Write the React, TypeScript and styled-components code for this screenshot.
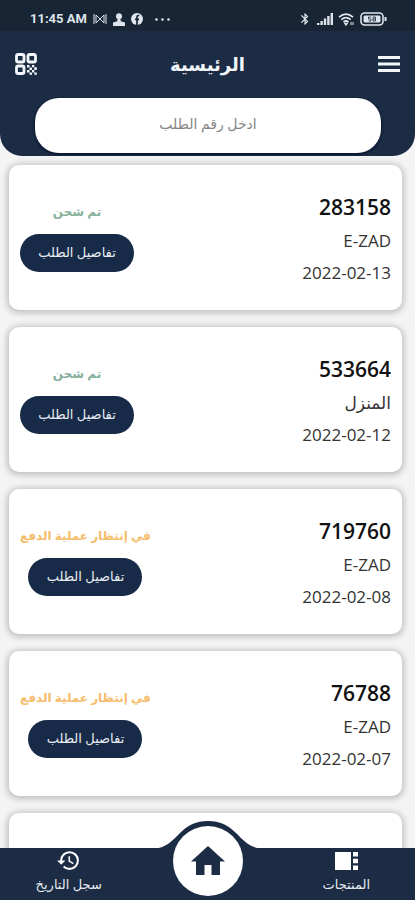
import React from "react";
import styled, { createGlobalStyle } from "styled-components";
import { MdBluetooth, MdHistory } from "react-icons/md";

const navy = "#1b2c44";

const GlobalStyle = createGlobalStyle`
  * { box-sizing: border-box; }
  body { margin: 0; background: #f4f4f4; }
  button, input { font: inherit; }
`;

const Screen = styled.div`
  height: 100vh;
  display: flex;
  flex-direction: column;
  overflow: hidden;
  background: #f4f4f4;
  color: #111;
  font-family: "Open Sans", "DejaVu Sans", sans-serif;
`;

const Header = styled.header`
  flex: none;
  background: ${navy};
  border-radius: 0 0 22px 22px;
  overflow: hidden;
`;

const StatusBar = styled.div`
  height: 31px;
  padding: 8px 28px 0 30px;
  display: flex;
  justify-content: space-between;
  background: #182535;
  color: #dfe5ec;
`;

const StatusGroup = styled.div<{ $gap: number }>`
  height: 22px;
  display: flex;
  align-items: center;
  gap: ${(p) => p.$gap}px;
`;

const Clock = styled.span`
  font: 700 13px/22px Roboto, sans-serif;
`;

const TitleBar = styled.div`
  height: 67px;
  padding: 0 14px 2px;
  display: grid;
  grid-template-columns: 24px 1fr 24px;
  align-items: center;
`;

const Title = styled.h1`
  margin: 0;
  color: #f2f5f9;
  font-size: 18px;
  font-weight: 700;
  line-height: 32px;
  text-align: center;
`;

const IconButton = styled.button`
  width: 24px;
  height: 32px;
  padding: 0;
  border: 0;
  background: none;
  color: #f3f6fa;
  display: grid;
  place-items: center;
  cursor: pointer;
`;

const SearchForm = styled.form`
  padding: 0 34px 3px 35px;
`;

const SearchInput = styled.input`
  display: block;
  width: 100%;
  height: 55px;
  padding: 0 20px 4px;
  border: 0;
  border-radius: 24px;
  background: #fff;
  color: #333;
  font-size: 14px;
  text-align: center;
  box-shadow: 0 1px 2px 1px #0a1830;
  &::placeholder { color: #858585; opacity: 1; }
`;

const OrderList = styled.main`
  flex: 1;
  min-height: 0;
  padding: 9px 13px 0 9px;
  display: flex;
  flex-direction: column;
  gap: 17px;
  overflow-y: auto;
  scrollbar-width: none;
`;

const Card = styled.article`
  flex: none;
  height: 145px;
  padding: 0 11px;
  display: flex;
  justify-content: space-between;
  align-items: center;
  border-radius: 10px;
  background: #fff;
  box-shadow: 0 1px 6px 2px rgba(0, 0, 0, 0.22);
`;

const OrderState = styled.div`
  padding-bottom: 4px;
  display: flex;
  flex-direction: column;
  align-items: center;
  gap: 10px;
`;

const StateLabel = styled.span<{ $color: string }>`
  color: ${(p) => p.$color};
  font-size: 12px;
  font-weight: 700;
  line-height: 24px;
`;

const DetailsButton = styled.button`
  width: 114px;
  height: 38px;
  padding: 0 0 2px;
  border: 0;
  border-radius: 19px;
  background: #172a47;
  color: #e9edf3;
  font-size: 13px;
  cursor: pointer;
`;

const OrderInfo = styled.div`
  padding-top: 2px;
  display: flex;
  flex-direction: column;
  align-items: flex-end;
`;

const OrderNumber = styled.h2`
  margin: 0;
  font-size: 21px;
  font-weight: 600;
  line-height: 36px;
`;

const InfoLine = styled.span`
  color: #333;
  font-size: 17px;
  line-height: 32px;
`;

const BottomNav = styled.nav`
  position: relative;
  flex: none;
  height: 52px;
  display: grid;
  grid-template-columns: 1fr 140px 1fr;
  background: ${navy};
`;

const NavLink = styled.a`
  display: flex;
  flex-direction: column;
  align-items: center;
  color: #e6ebf1;
  font-size: 13px;
  line-height: 22px;
  text-decoration: none;
`;

const NavIcon = styled.span`
  height: 25px;
  display: grid;
  place-items: center;
  color: #fff;
`;

const Bump = styled.svg`
  position: absolute;
  left: 50%;
  bottom: 100%;
  transform: translateX(-50%);
  margin-bottom: -1px;
`;

const HomeLink = styled.a`
  position: absolute;
  left: 50%;
  bottom: 4px;
  transform: translateX(-50%);
  width: 70px;
  height: 70px;
  display: grid;
  place-items: center;
  border-radius: 50%;
  background: #fff;
  color: ${navy};
`;

type Order = { id: string; place: string; date: string; state: "shipped" | "pending" };

const orders: Order[] = [
  { id: "283158", place: "E-ZAD", date: "2022-02-13", state: "shipped" },
  { id: "533664", place: "المنزل", date: "2022-02-12", state: "shipped" },
  { id: "719760", place: "E-ZAD", date: "2022-02-08", state: "pending" },
  { id: "76788", place: "E-ZAD", date: "2022-02-07", state: "pending" },
];

const states = {
  shipped: { label: "تم شحن", color: "#86b09b" },
  pending: { label: "في إنتظار عملية الدفع", color: "#f5bd6b" },
};

const QrIcon = () => (
  <svg width="22" height="22" viewBox="0 0 22 22" fill="none" stroke="currentColor" strokeWidth="2.8">
    <rect x="1.5" y="1.5" width="7.5" height="7.5" rx="1.8" />
    <rect x="13" y="1.5" width="7.5" height="7.5" rx="1.8" />
    <rect x="1.5" y="13" width="7.5" height="7.5" rx="1.8" />
    <path fill="currentColor" stroke="none" d="M12 12h2.5v2.5H12zM17 12h2.3v2.3H17zM14.5 14.5H17V17h-2.5zM19.3 14.3h2.5V17h-2.5zM12 17h2.5v2.4H12zM17 17h2.3v2.4H17zM14.5 19.4H17v2.4h-2.5zM19.3 19.4h2.5v2.4h-2.5z" />
  </svg>
);

const MenuIcon = () => (
  <svg width="22" height="16" viewBox="0 0 22 16" fill="currentColor">
    <path d="M0 0h22v3H0zM0 6.5h22v3H0zM0 13h22v3H0z" />
  </svg>
);

const HomeIcon = () => (
  <svg width="34" height="30" viewBox="0 0 34 30" fill="currentColor">
    <path d="M17 0L0 15.500h5V29h8.500V19h7v10H29V15.500h5z" />
  </svg>
);

const ProductsIcon = () => (
  <svg width="23" height="18" viewBox="0 0 23 18" fill="currentColor">
    <path d="M0 0h16v18H0zM18 0h5v4.5h-5zM18 6.7h5v4.6h-5zM18 13.5h5V18h-5z" />
  </svg>
);

const NotificationIcons = () => (
  <>
    <svg width="14" height="12" viewBox="0 0 14 12" fill="none" stroke="currentColor">
      <path d="M1 1v10M13 1v10M3 2l8 8M3 10l8-8M3 2v8M11 2v8" />
    </svg>
    <svg width="12" height="13" viewBox="0 0 12 13" fill="currentColor">
      <circle cx="6" cy="3.2" r="3" />
      <path d="M4.7 5h2.6l.5 3.2L12 9.5V13H0V9.5l4.2-1.3z" />
    </svg>
    <svg width="12" height="12" viewBox="0 0 12 12">
      <circle cx="6" cy="6" r="6" fill="currentColor" />
      <path d="M8.3 2.5h-1Q6 2.5 6 4v8M4 6.3h4" fill="none" stroke="#182535" strokeWidth="1.7" />
    </svg>
  </>
);

const DotsIcon = () => (
  <svg width="15" height="3" viewBox="0 0 15 3" fill="currentColor">
    <circle cx="1.5" cy="1.5" r="1.3" />
    <circle cx="7.5" cy="1.5" r="1.3" />
    <circle cx="13.5" cy="1.5" r="1.3" />
  </svg>
);

const SignalIcons = () => (
  <>
    <svg width="16" height="12" viewBox="0 0 16 12" fill="currentColor">
      <path d="M0 10h2.4v2H0zM3.4 8h2.4v4H3.4zM6.8 5.5h2.4V12H6.8zM10.2 3h2.4v9h-2.4zM13.6 0H16v12h-2.4z" />
    </svg>
    <svg width="17" height="13" viewBox="0 0 17 13" fill="none" stroke="currentColor" strokeWidth="1.7">
      <path d="M1 4.2Q8 -2 15 4.2M3.3 6.7Q8 2.7 12.7 6.7M5.5 9Q8 7 10.5 9" />
      <path d="M8 12.5L6.3 10.2h3.4zM13 9v3M15 9v3" fill="currentColor" strokeWidth="1" />
    </svg>
    <svg width="27" height="14" viewBox="0 0 27 14" fill="none" stroke="currentColor">
      <rect x="1" y="1" width="22" height="12" rx="3.5" strokeWidth="1.6" />
      <rect x="3.5" y="3.5" width="17" height="7" rx="1.5" fill="currentColor" stroke="none" />
      <path d="M25.5 5v4" strokeWidth="2" />
      <path d="M11 5H8.500v2H11v2H8.500M15.500 5H13v4h2.500zM13 7h2.500" stroke="#182535" strokeWidth=".8" />
    </svg>
  </>
);

const OrderCard = ({ order }: { order: Order }) => (
  <Card>
    <OrderState>
      <StateLabel dir="rtl" $color={states[order.state].color}>{states[order.state].label}</StateLabel>
      <DetailsButton type="button" dir="rtl">تفاصيل الطلب</DetailsButton>
    </OrderState>
    <OrderInfo>
      <OrderNumber>{order.id}</OrderNumber>
      <InfoLine>{order.place}</InfoLine>
      <InfoLine>{order.date}</InfoLine>
    </OrderInfo>
  </Card>
);

export default function App() {
  return (
    <Screen lang="ar">
      <GlobalStyle />
      <Header>
        <StatusBar>
          <StatusGroup $gap={12}>
            <StatusGroup $gap={6}>
              <Clock>11:45 AM</Clock>
              <NotificationIcons />
            </StatusGroup>
            <DotsIcon />
          </StatusGroup>
          <StatusGroup $gap={5}>
            <MdBluetooth size={14} />
            <SignalIcons />
          </StatusGroup>
        </StatusBar>
        <TitleBar>
          <IconButton type="button" aria-label="QR"><QrIcon /></IconButton>
          <Title dir="rtl">الرئيسية</Title>
          <IconButton type="button" aria-label="القائمة"><MenuIcon /></IconButton>
        </TitleBar>
        <SearchForm>
          <SearchInput dir="rtl" aria-label="ادخل رقم الطلب" placeholder="ادخل رقم الطلب" />
        </SearchForm>
      </Header>
      <OrderList>
        {orders.map((order) => <OrderCard key={order.id} order={order} />)}
        <Card />
      </OrderList>
      <BottomNav>
        <Bump width="110" height="28" viewBox="0 0 110 28" fill={navy}>
          <path d="M0 28C13 27 19 20 27 12C35 4 43 0 55 0S75 4 83 12C91 20 97 27 110 28Z" />
        </Bump>
        <NavLink href="#history">
          <NavIcon><MdHistory size={25} /></NavIcon>
          سجل التاريخ
        </NavLink>
        <span />
        <NavLink href="#products">
          <NavIcon><ProductsIcon /></NavIcon>
          المنتجات
        </NavLink>
        <HomeLink href="#home" aria-label="الرئيسية"><HomeIcon /></HomeLink>
      </BottomNav>
    </Screen>
  );
}
